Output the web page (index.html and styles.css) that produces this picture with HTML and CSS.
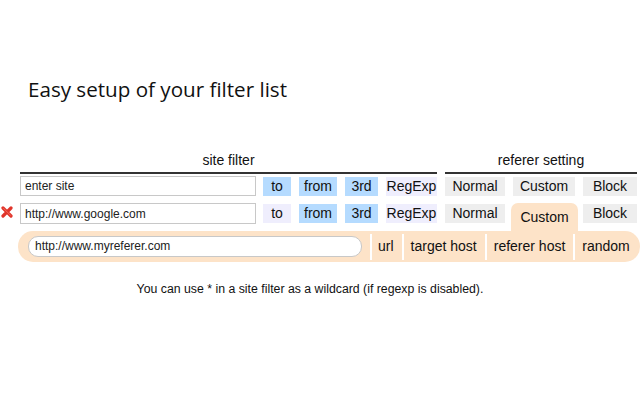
FILE: index.html
```html
<!DOCTYPE html>
<html>
<head>
<meta charset="utf-8">
<link rel="stylesheet" href="styles.css">
</head>
<body>
<div class="page">
  <h1 class="title">Easy setup of your filter list</h1>
  <div class="table">
    <div class="row head">
      <div class="slot"></div>
      <div class="h-site">site filter</div>
      <div class="h-ref">referer setting</div>
    </div>
    <div class="row r1">
      <div class="slot"></div>
      <div class="site"><span class="ph">enter site</span></div>
      <div class="btn on w-to">to</div>
      <div class="btn on w-from">from</div>
      <div class="btn on w-3rd">3rd</div>
      <div class="btn off w-re">RegExp</div>
      <div class="btn grey w-normal first-ref">Normal</div>
      <div class="btn grey w-custom">Custom</div>
      <div class="btn grey w-block">Block</div>
    </div>
    <div class="row r2">
      <div class="slot">
        <svg class="del" width="12" height="12" viewBox="0 0 12 12">
          <path d="M2 2 L10 10 M10 2 L2 10" stroke="#e0342a" stroke-width="3.2" stroke-linecap="round"/>
          <path d="M2.6 2.4 L9.6 9.4" stroke="#f26a5c" stroke-width="1" stroke-linecap="round"/>
        </svg>
      </div>
      <div class="site"><span class="val">http://www.google.com</span></div>
      <div class="btn off w-to">to</div>
      <div class="btn on w-from">from</div>
      <div class="btn on w-3rd">3rd</div>
      <div class="btn off w-re">RegExp</div>
      <div class="btn grey w-normal first-ref">Normal</div>
      <div class="tab">Custom</div>
      <div class="btn grey w-block">Block</div>
    </div>
    <div class="custom-bar">
      <div class="ref-input">http://www.myreferer.com</div>
      <div class="opt">url</div>
      <div class="opt">target host</div>
      <div class="opt">referer host</div>
      <div class="opt">random</div>
    </div>
  </div>
  <p class="note">You can use * in a site filter as a wildcard (if regexp is disabled).</p>
</div>
</body>
</html>
```
FILE: styles.css
```css
html, body {
  margin: 0;
  padding: 0;
  background: #ffffff;
}
.page {
  width: 640px;
  height: 400px;
  overflow: hidden;
  padding-top: 76px;
  box-sizing: border-box;
  font-family: "Liberation Sans", Arial, sans-serif;
  color: #111;
}
.title {
  margin: 0 0 50px 0;
  padding-left: 28px;
  font-family: "Open Sans", "Noto Sans", sans-serif;
  font-weight: normal;
  font-size: 20.6px;
  line-height: 26px;
  color: #111;
}
.row {
  display: flex;
  align-items: flex-start;
}
.slot {
  width: 20px;
  flex: none;
  position: relative;
}
.head {
  height: 24px;
  font-size: 14px;
  line-height: 16px;
}
.h-site, .h-ref {
  text-align: center;
  height: 20px;
  border-bottom: 2px solid #333;
}
.h-site { width: 417px; }
.h-ref { width: 192px; margin-left: 8px; }
.r1 { height: 27px; }
.r2 { height: 28px; }
.site {
  width: 236px;
  height: 20px;
  box-sizing: border-box;
  border: 1px solid #c8c8c8;
  font-size: 12px;
  line-height: 19px;
  padding-left: 4px;
  color: #222;
  margin-right: 7px;
}
.r2 .site { margin-top: 0; height: 21px; line-height: 20px; }
.btn {
  height: 19px;
  margin-top: 1px;
  font-size: 14px;
  line-height: 19px;
  text-align: center;
  margin-right: 8px;
}
.on { background: #b5dbff; }
.off { background: #efeefd; }
.grey { background: #eeeeee; }
.w-to { width: 28px; }
.w-from { width: 38px; }
.w-3rd { width: 33px; }
.w-re { width: 51px; }
.w-normal { width: 60px; }
.w-custom { width: 62px; }
.w-block { width: 54px; margin-right: 0; }
.tab {
  width: 67px;
  height: 28px;
  margin-left: -2px;
  margin-right: 5px;
  background: #fde3c8;
  border-radius: 7px 7px 0 0;
  font-size: 14px;
  line-height: 16px;
  padding-top: 6px;
  box-sizing: border-box;
  text-align: center;
}
.del {
  position: absolute;
  left: 1px;
  top: 3px;
}
.custom-bar {
  display: flex;
  align-items: center;
  margin-left: 18px;
  width: 622px;
  height: 31px;
  background: #fde3c8;
  border-radius: 15px;
  padding-left: 10px;
  box-sizing: border-box;
  font-size: 14px;
  white-space: nowrap;
}
.ref-input {
  flex: none;
  width: 334px;
  height: 21px;
  box-sizing: border-box;
  background: #fff;
  border: 1px solid #c8c8c8;
  border-radius: 10px;
  font-size: 12px;
  line-height: 19px;
  padding-left: 6px;
  color: #222;
  margin-right: 8px;
}
.opt {
  flex: none;
  border-left: 2px solid #ffffff;
  height: 26px;
  line-height: 25px;
  padding: 0 8px 0 6px;
}
.opt + .opt { padding-left: 7px; }
.note {
  margin: 20px 0 0 0;
  text-align: center;
  padding-right: 20px;
  font-size: 12.3px;
  line-height: 14px;
}
```
